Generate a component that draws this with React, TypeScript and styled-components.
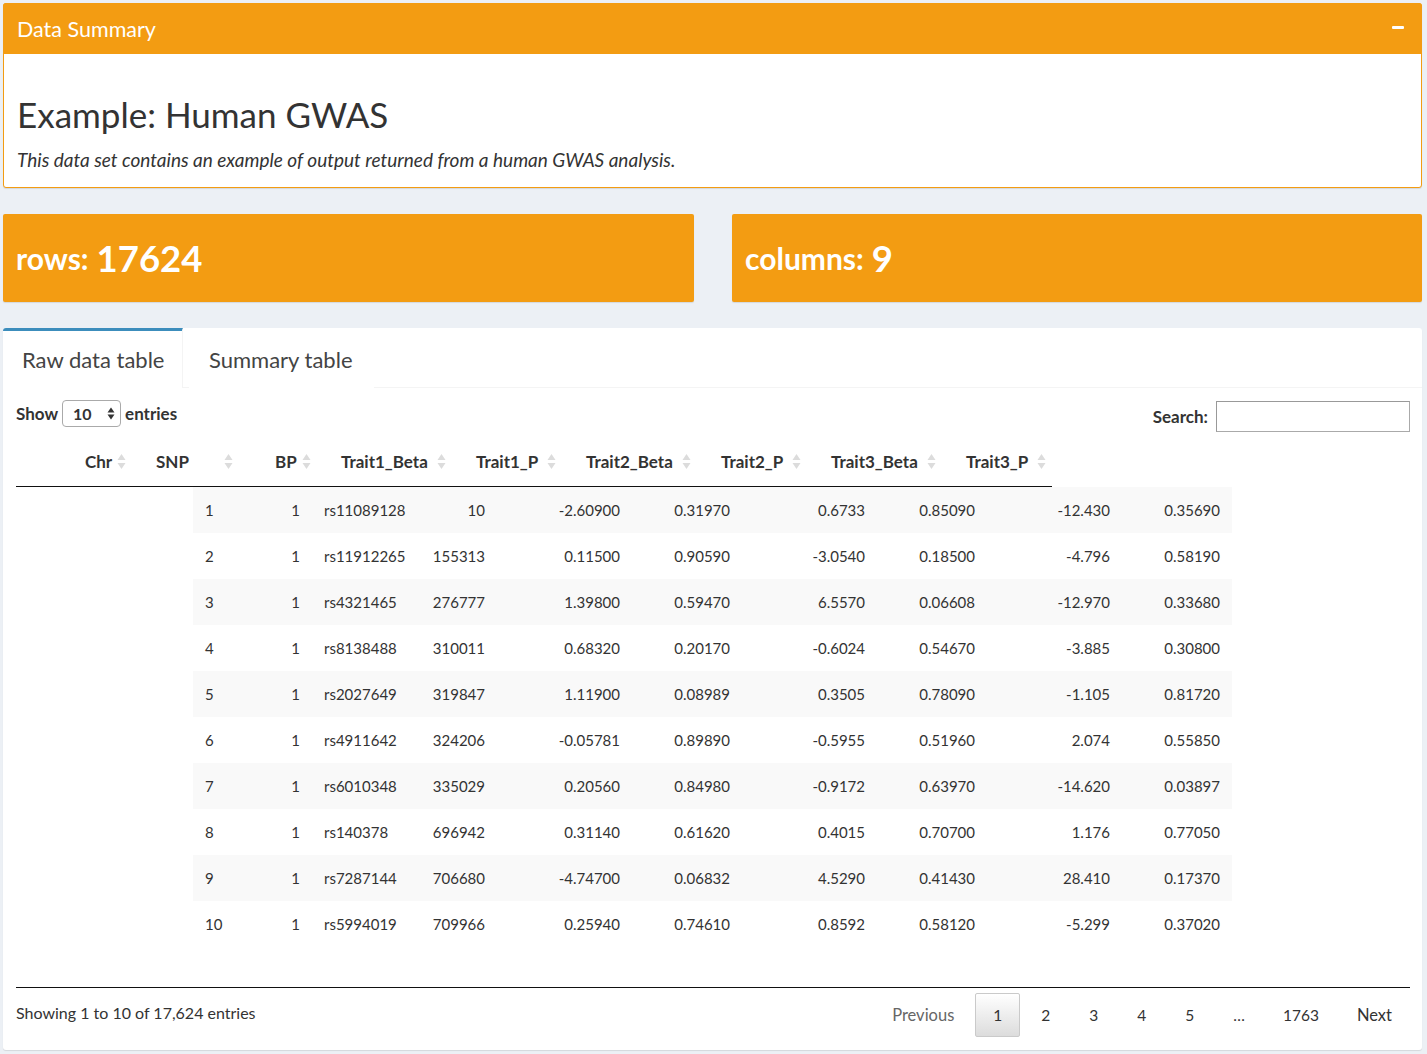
import React from "react";
import styled, { createGlobalStyle } from "styled-components";

const Global = createGlobalStyle`
  html, body { margin: 0; padding: 0; }
  body {
    background: #ecf0f5;
    font-family: Lato, "Open Sans", "Liberation Sans", sans-serif;
    color: #333;
    font-size: 15px;
  }
  * { box-sizing: border-box; }
`;

const ORANGE = "#f39c12";

const Page = styled.div`
  padding: 3px 5px 4px 3px;
  display: flex;
  flex-direction: column;
  gap: 26px;
`;

const Box = styled.section`
  background: #fff;
  border: 1px solid ${ORANGE};
  border-radius: 3px;
  box-shadow: 0 1px 1px rgba(0, 0, 0, 0.1);
`;

const BoxHeader = styled.header`
  height: 51px;
  background: ${ORANGE};
  color: #fff;
  display: flex;
  align-items: center;
  justify-content: space-between;
  padding: 0 18px 0 14px;
  margin: -1px -1px 0 -1px;
  border-radius: 3px 3px 0 0;
`;

const BoxTitle = styled.h3`
  margin: 0;
  font-size: 21.5px;
  font-weight: 400;
`;

const Minus = styled.span`
  width: 12px;
  height: 3px;
  border-radius: 1px;
  background: #fff;
  display: block;
  margin-top: -3px;
`;

const BoxBody = styled.div`
  padding: 10px 13px 10px 13px;
`;

const Title = styled.h2`
  margin: 31px 0 13px;
  font-size: 35px;
  font-weight: 400;
  line-height: 1.1;
  color: #333;
`;

const Lead = styled.p`
  margin: 0 0 4px;
  font-size: 19px;
  font-style: italic;
  line-height: 1.42;
`;

const ValueRow = styled.div`
  display: grid;
  grid-template-columns: 691px 690px;
  column-gap: 38px;
`;

const ValueBox = styled.div`
  height: 88px;
  background: ${ORANGE};
  color: #fff;
  border-radius: 2px;
  box-shadow: 0 1px 1px rgba(0, 0, 0, 0.1);
  display: flex;
  align-items: center;
  padding: 0 13px;
  font-weight: 700;
`;

const ValueLabel = styled.span`
  font-size: 30px;
  margin-right: 8px;
`;

const ValueNumber = styled.span`
  font-size: 36.5px;
`;

const TabBox = styled.section`
  background: #fff;
  border-radius: 3px;
  box-shadow: 0 1px 1px rgba(0, 0, 0, 0.1);
`;

const TabList = styled.nav`
  display: flex;
  gap: 6px;
  border-bottom: 1px solid #f4f4f4;
`;

const Tab = styled.div<{ $active?: boolean }>`
  height: 60px;
  margin-bottom: -1px;
  padding: 0 ${(p) => (p.$active ? 19 : 20)}px;
  width: ${(p) => (p.$active ? "180px" : "auto")};
  display: flex;
  align-items: center;
  white-space: nowrap;
  font-size: 22px;
  color: #444;
  background: #fff;
  border-top: 3px solid ${(p) => (p.$active ? "#3c8dbc" : "transparent")};
  border-right: 1px solid ${(p) => (p.$active ? "#f4f4f4" : "transparent")};
  border-top-left-radius: 3px;
`;

const TabContent = styled.div`
  padding: 12px 12px 13px 13px;
`;

const Controls = styled.div`
  display: flex;
  align-items: center;
  justify-content: space-between;
  height: 31px;
  font-weight: 700;
  font-size: 17px;
`;

const LengthCtl = styled.label`
  display: flex;
  align-items: center;
  gap: 4px;
  margin-top: -4px;
`;

const SelectBox = styled.span`
  width: 59px;
  height: 27px;
  border: 1px solid #aaa;
  border-radius: 4px;
  display: flex;
  align-items: center;
  justify-content: space-between;
  padding: 0 5px 0 10px;
  font-weight: 700;
  font-size: 16px;
  background: #fff;
`;

const SearchCtl = styled.label`
  display: flex;
  align-items: center;
  gap: 8px;
  margin-top: 2px;
`;

const SearchInput = styled.input`
  width: 194px;
  height: 31px;
  border: 1px solid #aaa;
  border-top-color: #999;
  border-left-color: #999;
  background: #fff;
  padding: 4px;
  font: inherit;
`;

const HeadRow = styled.div`
  width: 1036px;
  height: 50px;
  margin-top: 6px;
  display: flex;
  border-bottom: 1px solid #111;
`;

const HeadCell = styled.div<{ $w: number; $pr?: number }>`
  width: ${(p) => p.$w}px;
  flex: none;
  display: flex;
  align-items: center;
  padding: 0 ${(p) => p.$pr ?? 20}px 0 10px;
  font-weight: 700;
  font-size: 17px;
  color: #333;
`;

const SortIcon = styled.svg`
  margin-left: auto;
  flex: none;
`;

const BodyTable = styled.table`
  margin-left: 177px;
  border-collapse: collapse;
  table-layout: fixed;
  width: 1039px;
  font-size: 15px;
`;

const Tr = styled.tr<{ $odd: boolean }>`
  background: ${(p) => (p.$odd ? "#f9f9f9" : "#fff")};
  & + & td {
    border-top: 1px solid #ddd;
  }
`;

const Td = styled.td<{ $align: "left" | "right" }>`
  height: 46px;
  padding: 0 12px;
  text-align: ${(p) => p.$align};
  white-space: nowrap;
  color: #333;
`;

const Footer = styled.div`
  margin-top: 40px;
  border-top: 1px solid #111;
  display: flex;
  align-items: flex-start;
  justify-content: space-between;
  padding-top: 5px;
`;

const Info = styled.div`
  font-size: 16px;
  padding-top: 10px;
`;

const Pager = styled.div`
  display: flex;
  align-items: center;
  font-size: 15.5px;
`;

const PageBtn = styled.span<{ $current?: boolean; $disabled?: boolean; $wide?: boolean }>`
  height: 44px;
  min-width: 45px;
  padding: 0 ${(p) => (p.$wide ? 17 : 16)}px;
  margin-left: 3px;
  display: flex;
  align-items: center;
  justify-content: center;
  border: 1px solid ${(p) => (p.$current ? "#cacaca" : "transparent")};
  border-radius: 2px;
  background: ${(p) =>
    p.$current ? "linear-gradient(to bottom, #fff 0%, #dcdcdc 100%)" : "transparent"};
  color: ${(p) => (p.$disabled ? "#666" : "#333")};
  font-size: ${(p) => (p.$wide ? "16.5px" : "inherit")};
`;

const Ellipsis = styled.span`
  padding: 0 18px;
  margin-left: 3px;
  color: #333;
`;

const Sort = () => (
  <SortIcon width="9" height="17" viewBox="0 0 9 17">
    <path d="M4.5 1 L8.5 7 L0.5 7 Z" fill="#dcdcdc" />
    <path d="M4.5 16 L8.5 10 L0.5 10 Z" fill="#dcdcdc" />
  </SortIcon>
);

const SelArrows = () => (
  <svg width="8" height="13" viewBox="0 0 8 13">
    <path d="M4 0.5 L7.5 5.5 L0.5 5.5 Z" fill="#333" />
    <path d="M4 12.5 L7.5 7.5 L0.5 7.5 Z" fill="#333" />
  </svg>
);

const headers: { label: string; w: number; pr?: number }[] = [
  { label: "", w: 59 },
  { label: "Chr", w: 71 },
  { label: "SNP", w: 119, pr: 32 },
  { label: "BP", w: 66 },
  { label: "Trait1_Beta", w: 135 },
  { label: "Trait1_P", w: 110 },
  { label: "Trait2_Beta", w: 135 },
  { label: "Trait2_P", w: 110 },
  { label: "Trait3_Beta", w: 135 },
  { label: "Trait3_P", w: 96, pr: 6 },
];

const colWidths = [57, 62, 106, 79, 135, 110, 135, 110, 135, 110];
const colAlign: ("left" | "right")[] = [
  "left", "right", "left", "right", "right", "right", "right", "right", "right", "right",
];

const rows = [
  ["1", "1", "rs11089128", "10", "-2.60900", "0.31970", "0.6733", "0.85090", "-12.430", "0.35690"],
  ["2", "1", "rs11912265", "155313", "0.11500", "0.90590", "-3.0540", "0.18500", "-4.796", "0.58190"],
  ["3", "1", "rs4321465", "276777", "1.39800", "0.59470", "6.5570", "0.06608", "-12.970", "0.33680"],
  ["4", "1", "rs8138488", "310011", "0.68320", "0.20170", "-0.6024", "0.54670", "-3.885", "0.30800"],
  ["5", "1", "rs2027649", "319847", "1.11900", "0.08989", "0.3505", "0.78090", "-1.105", "0.81720"],
  ["6", "1", "rs4911642", "324206", "-0.05781", "0.89890", "-0.5955", "0.51960", "2.074", "0.55850"],
  ["7", "1", "rs6010348", "335029", "0.20560", "0.84980", "-0.9172", "0.63970", "-14.620", "0.03897"],
  ["8", "1", "rs140378", "696942", "0.31140", "0.61620", "0.4015", "0.70700", "1.176", "0.77050"],
  ["9", "1", "rs7287144", "706680", "-4.74700", "0.06832", "4.5290", "0.41430", "28.410", "0.17370"],
  ["10", "1", "rs5994019", "709966", "0.25940", "0.74610", "0.8592", "0.58120", "-5.299", "0.37020"],
];

export default function App() {
  return (
    <>
      <Global />
      <Page>
        <Box>
          <BoxHeader>
            <BoxTitle>Data Summary</BoxTitle>
            <Minus />
          </BoxHeader>
          <BoxBody>
            <Title>Example: Human GWAS</Title>
            <Lead>This data set contains an example of output returned from a human GWAS analysis.</Lead>
          </BoxBody>
        </Box>

        <ValueRow>
          <ValueBox>
            <ValueLabel>rows:</ValueLabel>
            <ValueNumber>17624</ValueNumber>
          </ValueBox>
          <ValueBox>
            <ValueLabel>columns:</ValueLabel>
            <ValueNumber>9</ValueNumber>
          </ValueBox>
        </ValueRow>

        <TabBox>
          <TabList>
            <Tab $active>Raw data table</Tab>
            <Tab>Summary table</Tab>
          </TabList>
          <TabContent>
            <Controls>
              <LengthCtl>
                Show
                <SelectBox>
                  10
                  <SelArrows />
                </SelectBox>
                entries
              </LengthCtl>
              <SearchCtl>
                Search:
                <SearchInput type="search" />
              </SearchCtl>
            </Controls>

            <HeadRow>
              {headers.map((h, i) => (
                <HeadCell key={i} $w={h.w} $pr={h.pr}>
                  {h.label}
                  {h.label && <Sort />}
                </HeadCell>
              ))}
            </HeadRow>

            <BodyTable>
              <colgroup>
                {colWidths.map((w, i) => (
                  <col key={i} style={{ width: w }} />
                ))}
              </colgroup>
              <tbody>
                {rows.map((r, ri) => (
                  <Tr key={ri} $odd={ri % 2 === 0}>
                    {r.map((c, ci) => (
                      <Td key={ci} $align={colAlign[ci]}>
                        {c}
                      </Td>
                    ))}
                  </Tr>
                ))}
              </tbody>
            </BodyTable>

            <Footer>
              <Info>Showing 1 to 10 of 17,624 entries</Info>
              <Pager>
                <PageBtn $disabled $wide>Previous</PageBtn>
                <PageBtn $current>1</PageBtn>
                <PageBtn>2</PageBtn>
                <PageBtn>3</PageBtn>
                <PageBtn>4</PageBtn>
                <PageBtn>5</PageBtn>
                <Ellipsis>…</Ellipsis>
                <PageBtn>1763</PageBtn>
                <PageBtn $wide>Next</PageBtn>
              </Pager>
            </Footer>
          </TabContent>
        </TabBox>
      </Page>
    </>
  );
}
